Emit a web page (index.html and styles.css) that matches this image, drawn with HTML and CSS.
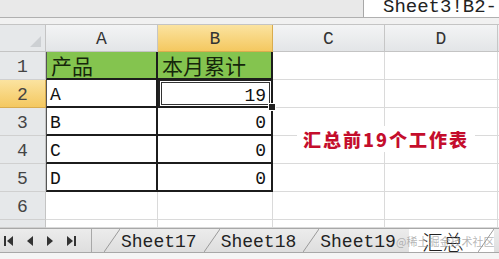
FILE: index.html
```html
<!DOCTYPE html>
<html lang="zh-CN">
<head>
    <meta charset="UTF-8">
    <title>汇总</title>
    <link rel="stylesheet" href="styles.css">
</head>
<body>
    <div class="topbar">
        <div class="fx"></div>
        <div class="formula">Sheet3!B2-</div>
    </div>
    <div class="spacer"></div>

    <div class="sheet">
        <div class="grid">
            <div class="corner"><span class="tri"></span></div>
            <div class="ch">A</div>
            <div class="ch sel">B</div>
            <div class="ch">C</div>
            <div class="ch">D</div>
            <div class="ch end"></div>

            <div class="rh">1</div>
            <div class="c t ta head">产品</div>
            <div class="c t head">本月累计</div>
            <div class="c"></div>
            <div class="c"></div>
            <div class="c end"></div>

            <div class="rh sel">2</div>
            <div class="c t ta">A</div>
            <div class="c t num active">19<span class="handle"></span></div>
            <div class="c"></div>
            <div class="c"></div>
            <div class="c end"></div>

            <div class="rh">3</div>
            <div class="c t ta">B</div>
            <div class="c t num">0</div>
            <div class="c"></div>
            <div class="c"></div>
            <div class="c end"></div>

            <div class="rh">4</div>
            <div class="c t ta">C</div>
            <div class="c t num">0</div>
            <div class="c"></div>
            <div class="c"></div>
            <div class="c end"></div>

            <div class="rh">5</div>
            <div class="c t ta">D</div>
            <div class="c t num">0</div>
            <div class="c"></div>
            <div class="c"></div>
            <div class="c end"></div>

            <div class="rh">6</div>
            <div class="c"></div>
            <div class="c"></div>
            <div class="c"></div>
            <div class="c"></div>
            <div class="c end"></div>

            <div class="rh"></div>
            <div class="c"></div>
            <div class="c"></div>
            <div class="c"></div>
            <div class="c"></div>
            <div class="c end"></div>
        </div>
        <!-- text box drawn over the grid -->
        <div class="note">汇总前19个工作表</div>
    </div>

    <div class="tabbar">
        <div class="nav">
            <svg width="9" height="10" viewBox="0 0 9 10"><rect x="0" y="0" width="2" height="10" fill="#333"/><path d="M9 0 L3 5 L9 10 Z" fill="#333"/></svg>
            <svg width="6" height="10" viewBox="0 0 6 10"><path d="M6 0 L0 5 L6 10 Z" fill="#333"/></svg>
            <svg width="6" height="10" viewBox="0 0 6 10"><path d="M0 0 L6 5 L0 10 Z" fill="#333"/></svg>
            <svg width="9" height="10" viewBox="0 0 9 10"><path d="M0 0 L6 5 L0 10 Z" fill="#333"/><rect x="7" y="0" width="2" height="10" fill="#333"/></svg>
        </div>
        <div class="tab first">
            <svg class="slant" width="16" height="23" viewBox="0 0 16 23"><path d="M0 23 L16 0" stroke="#9a9a9a" stroke-width="1"/></svg>
            <span>Sheet17</span>
        </div>
        <div class="tab">
            <svg class="slant" width="16" height="23" viewBox="0 0 16 23"><path d="M0 23 L16 0" stroke="#9a9a9a" stroke-width="1"/></svg>
            <span>Sheet18</span>
        </div>
        <div class="tab">
            <svg class="slant" width="16" height="23" viewBox="0 0 16 23"><path d="M0 23 L16 0" stroke="#9a9a9a" stroke-width="1"/></svg>
            <span>Sheet19</span>
        </div>
        <div class="tab current">
            <span>汇总</span>
            <svg class="slant" width="16" height="23" viewBox="0 0 16 23"><path d="M0 23 L16 0" stroke="#9a9a9a" stroke-width="1"/></svg>
        </div>
        <div class="mark">@稀土掘金技术社区</div>
    </div>
    <div class="status"></div>
</body>
</html>
```

FILE: styles.css
```css
body {
    margin: 0;
    width: 499px;
    height: 259px;
    overflow: hidden;
    background: #fff;
    font-family: "Liberation Mono", "Noto Sans CJK SC", monospace;
    color: #111;
}
.topbar {
    display: flex;
    height: 17px;
    background: #e9e9e9;
    border-bottom: 1px solid #b0b0b0;
}
.fx {
    width: 363px;
}
.formula {
    flex: 1;
    background: #fff;
    border-left: 1px solid #a8a8a8;
    padding-left: 19px;
    font-size: 19px;
    line-height: 14px;
    color: #222;
    overflow: hidden;
    white-space: nowrap;
}
.spacer {
    height: 6px;
    background: #f1f1f1;
    border-bottom: 1px solid #c4c4c4;
}
.sheet {
    position: relative;
}
.grid {
    display: grid;
    grid-template-columns: 46px 112px 115px 112px 113px 1fr;
    grid-template-rows: 27px repeat(6, 28px) 8px;
}
.grid > div {
    box-sizing: border-box;
}
.corner {
    position: relative;
    background: #e6e8ea;
    border-right: 1px solid #c4c4c4;
    border-bottom: 1px solid #c4c4c4;
}
.tri {
    position: absolute;
    right: 4px;
    bottom: 4px;
    border-left: 11px solid transparent;
    border-bottom: 11px solid #cdd0d3;
}
.ch {
    background: linear-gradient(#f3f4f5, #e3e5e7);
    border-right: 1px solid #c6c6c6;
    border-bottom: 1px solid #c4c4c4;
    text-align: center;
    font-size: 18px;
    line-height: 28px;
    color: #333;
}
.rh {
    background: #e6e8ea;
    border-right: 1px solid #c4c4c4;
    border-bottom: 1px solid #d0d0d0;
    text-align: center;
    font-size: 18px;
    line-height: 30px;
    color: #444;
}
.ch.sel,
.rh.sel {
    background: linear-gradient(#fbe3a0, #f4c860);
    border-color: #d9ac4e;
}
.c {
    border-right: 1px solid #dadada;
    border-bottom: 1px solid #dadada;
    font-size: 18px;
    line-height: 30px;
    padding: 0 3px;
    white-space: nowrap;
}
.c.end {
    border-right: none;
}
.t {
    border-right: 2px solid #1c1c1c;
    border-bottom: 2px solid #1c1c1c;
}
.ta {
    border-left: 1px solid #555;
}
.head {
    background: #84c44f;
    font-family: "Noto Sans CJK SC", sans-serif;
    font-size: 21px;
    line-height: 26px;
    color: #15260b;
    padding-left: 4px;
}
.num {
    text-align: right;
    padding-right: 5px;
}
.active {
    position: relative;
    box-shadow: inset 0 0 0 1px #fff, inset 0 0 0 2px #333;
    border-left: 2px solid #222;
    border-top: 1px solid #222;
}
.handle {
    position: absolute;
    right: -5px;
    bottom: -5px;
    width: 6px;
    height: 6px;
    background: #222;
    border: 1px solid #fff;
}
.note {
    position: absolute;
    left: 297px;
    top: 101px;
    width: 178px;
    height: 26px;
    background: #fff;
    font-family: "Noto Sans CJK SC", sans-serif;
    font-weight: 900;
    font-size: 18px;
    line-height: 26px;
    letter-spacing: 2px;
    text-align: center;
    color: #c40d2c;
}
.tabbar {
    position: relative;
    display: flex;
    align-items: flex-end;
    height: 23px;
    background: linear-gradient(#ececec, #dedede);
    border-top: 1px solid #a8a8a8;
    border-bottom: 1px solid #a8a8a8;
}
.nav {
    display: flex;
    flex-shrink: 0;
    align-items: center;
    gap: 14px;
    width: 92px;
    height: 23px;
    padding-left: 4px;
    box-sizing: border-box;
    border-right: 1px solid #a8a8a8;
}
.tab {
    display: flex;
    flex-shrink: 0;
    align-items: flex-end;
    height: 23px;
    font-size: 18px;
    line-height: 20px;
    white-space: nowrap;
    color: #222;
}
.tab.first {
    margin-left: 12px;
}
.tab span {
    padding: 0 7px 0 1px;
}
.slant {
    display: block;
}
.tab.current {
    background: #fff;
    margin-left: 6px;
    padding-left: 12px;
}
.tab.current span {
    font-family: "Noto Sans CJK SC", sans-serif;
    font-size: 21px;
    line-height: 22px;
    font-weight: 300;
    padding-right: 14px;
}
.mark {
    position: absolute;
    left: 396px;
    top: 5px;
    white-space: nowrap;
    font-family: "Noto Sans CJK SC", sans-serif;
    font-size: 11px;
    line-height: 14px;
    color: rgba(150, 150, 150, 0.7);
}
.status {
    height: 7px;
    background: #f5f5f5;
}
```
